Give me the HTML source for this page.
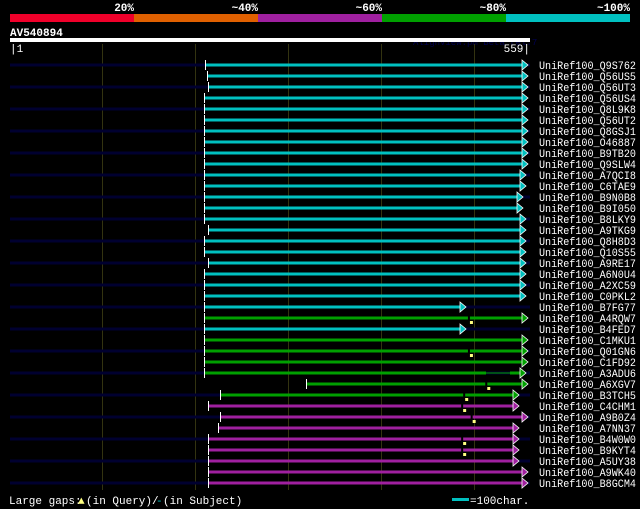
<!DOCTYPE html><html><head><style>body{margin:0;background:#000;width:640px;height:509px;overflow:hidden}svg{display:block}text{font-family:"Liberation Mono","DejaVu Sans Mono",monospace;fill:#fff}</style></head><body>
<svg width="640" height="509" xmlns="http://www.w3.org/2000/svg">
<rect width="640" height="509" fill="#000"/>
<g font-size="11" font-weight="bold" text-anchor="end">
<text x="134" y="11">20%</text><text x="258" y="11">~40%</text><text x="382" y="11">~60%</text><text x="506" y="11">~80%</text><text x="630" y="11">~100%</text></g>
<rect x="10" y="14" width="124" height="8" fill="#f0002a"/><rect x="134" y="14" width="124" height="8" fill="#e06000"/><rect x="258" y="14" width="124" height="8" fill="#a020a0"/><rect x="382" y="14" width="124" height="8" fill="#00a000"/><rect x="506" y="14" width="124" height="8" fill="#00c0c0"/>
<text x="10" y="36" font-size="11" font-weight="bold">AV540894</text>
<text x="413" y="45" font-size="9" style="fill:#000050">AlignView.pm Beta rel.7</text>
<rect x="10" y="38" width="520" height="4" fill="#fff"/>
<text x="10" y="52" font-size="11">|1</text><text x="530" y="52" font-size="11" text-anchor="end">559|</text>
<g stroke="#333310" stroke-width="1"><line x1="102.5" y1="44" x2="102.5" y2="490"/><line x1="195.5" y1="44" x2="195.5" y2="490"/><line x1="288.5" y1="44" x2="288.5" y2="490"/><line x1="381.5" y1="44" x2="381.5" y2="490"/><line x1="474.5" y1="44" x2="474.5" y2="490"/></g>
<g id="rows"></g>
<text x="9" y="504" font-size="11">Large gaps:</text><text x="78" y="504" font-size="11" style="fill:#ffff80">▲</text><text x="86" y="504" font-size="11">(in Query)/</text><text x="156" y="504" font-size="11" style="fill:#00c0c0">-</text><text x="163" y="504" font-size="11">(in Subject)</text>
<rect x="452" y="498" width="17" height="3" fill="#00c0c0"/><text x="470" y="504" font-size="11">=100char.</text>
</svg>
<script>
var C={c:"#00c0c0",g:"#00a000",m:"#a020a0"};
var R=[["Q9S762","c",205,527,1],["Q56US5","c",207,527,0],["Q56UT3","c",208,527,1],["Q56US4","c",204,527,0],["Q8L9K8","c",204,527,1],["Q56UT2","c",204,527,0],["Q8GSJ1","c",204,527,1],["O46887","c",204,527,0],["B9TB20","c",204,527,1],["Q9SLW4","c",204,527,0],["A7QCI8","c",204,525,1],["C6TAE9","c",204,525,0],["B9N0B8","c",204,522,1],["B9I050","c",204,522,0],["B8LKY9","c",204,525,1],["A9TKG9","c",208,525,0],["Q8H8D3","c",204,525,1],["Q10S55","c",204,525,0],["A9RE17","c",208,525,1],["A6N0U4","c",204,525,0],["A2XC59","c",204,525,1],["C0PKL2","c",204,525,0],["B7FG77","c",204,465,1],["A4RQW7","g",204,527,0,1],["B4FED7","c",204,465,1],["C1MKU1","g",204,527,0],["Q01GN6","g",204,527,1,1],["C1FD92","g",204,527,0],["A3ADU6","g",204,525,1,2],["A6XGV7","g",306,527,0,1],["B3TCH5","g",220,518,1,1],["C4CHM1","m",208,518,0,1],["A9B0Z4","m",220,527,1,1],["A7NN37","m",218,518,0],["B4W0W0","m",208,518,1,1],["B9KYT4","m",208,518,0,1],["A5UY38","m",208,518,1],["A9WK40","m",208,527,0],["B8GCM4","m",208,527,1]];
var s="";R.forEach(function(r,i){var y=65+11*i,col=C[r[1]],a=r[2],e=r[3]-5;
if(r[4])s+='<rect x="10" y="'+(y-1.5)+'" width="520" height="3" fill="#000030"/>';
if(r[5]==2){s+='<rect x="'+a+'" y="'+(y-1.5)+'" width="'+(486-a)+'" height="3" fill="'+col+'"/><rect x="486" y="'+(y-0.5)+'" width="24" height="1" fill="'+col+'"/><rect x="510" y="'+(y-1.5)+'" width="'+(e-510)+'" height="3" fill="'+col+'"/>';}
else s+='<rect x="'+a+'" y="'+(y-1.5)+'" width="'+(e-a)+'" height="3" fill="'+col+'"/>';
if(r[5]==1){s+='<rect x="'+(a+(e-a)*0.83)+'" y="'+(y-1.5)+'" width="2" height="3" fill="#000"/><rect x="'+(a+(e-a)*0.83+2)+'" y="'+(y+3)+'" width="3" height="3" fill="#ffff80"/>';}
s+='<rect x="'+a+'" y="'+(y-5)+'" width="1" height="10" fill="#fff"/>';
s+='<polygon points="'+e+','+(y-5)+' '+(e+6)+','+y+' '+e+','+(y+5)+'" fill="'+col+'" stroke="#fff" stroke-width="0.8"/>';
s+='<text x="539" y="'+(y+4)+'" font-size="11" textLength="97" lengthAdjust="spacingAndGlyphs">UniRef100_'+r[0]+'</text>';});
document.getElementById("rows").innerHTML=s;
</script>
</body></html>
